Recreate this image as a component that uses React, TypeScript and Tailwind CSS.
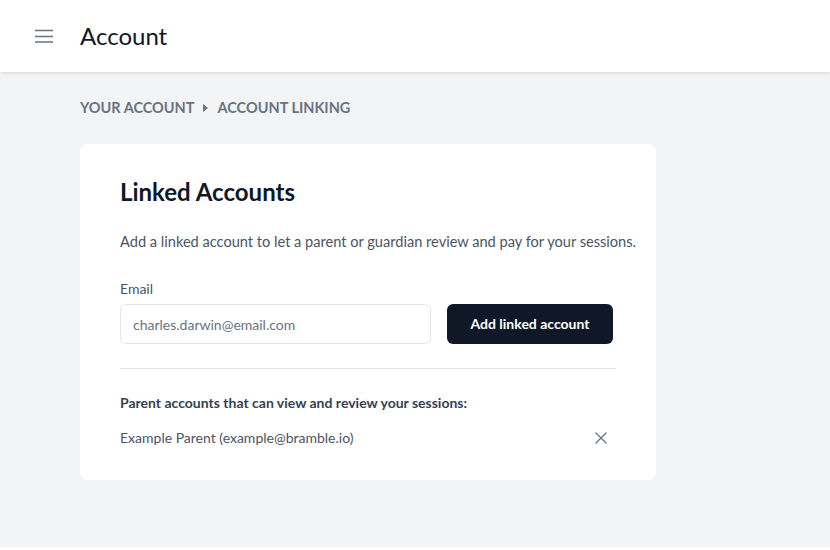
import { X } from 'lucide-react'

function MenuIcon() {
  return (
    <svg width="18" height="14" viewBox="0 0 18 14" className="text-gray-500">
      <path d="M0 1.5h18M0 7.5h18M0 13h18" stroke="currentColor" strokeWidth="1.6" />
    </svg>
  )
}

function Caret() {
  return (
    <svg width="5" height="8" viewBox="0 0 5 8" className="text-gray-500">
      <path d="M0 0L5 4L0 8Z" fill="currentColor" />
    </svg>
  )
}

export default function App() {
  return (
    <div className="h-[550px] bg-white font-['Lato','Noto_Sans',sans-serif] overflow-hidden">
      <div className="h-[547px] bg-gray-100">
        <header className="relative z-10 h-[72px] bg-white shadow-[0_1px_4px_rgba(0,0,0,0.12)] flex items-center">
          <button className="ml-[35px] flex items-center">
            <MenuIcon />
          </button>
          <h1 className="ml-[27px] text-2xl text-gray-900 leading-8">Account</h1>
        </header>

        <main className="pl-20 pt-[26px]">
          <nav className="flex items-center gap-[9px] text-[14.5px] leading-5 font-bold uppercase text-gray-500">
            <span>Your account</span>
            <Caret />
            <span>Account linking</span>
          </nav>

          <section className="mt-[26px] w-[576px] rounded-lg bg-white px-10 pt-8 pb-8">
            <h2 className="text-2xl leading-8 font-bold text-gray-900">Linked Accounts</h2>
            <p className="mt-6 whitespace-nowrap text-[14.6px] leading-5 text-gray-600">
              Add a linked account to let a parent or guardian review and pay for your sessions.
            </p>

            <label className="mt-[27px] block text-sm leading-5 text-gray-600">Email</label>
            <div className="mt-[5px] flex gap-4">
              <input
                className="w-[311px] h-10 rounded-md border border-gray-200 px-3 text-sm text-gray-700 placeholder:text-gray-500 outline-none"
                placeholder="charles.darwin@email.com"
              />
              <button className="w-[166px] h-10 rounded-md bg-gray-900 text-sm font-bold text-white">
                Add linked account
              </button>
            </div>

            <div className="mt-6 border-t border-gray-200" />

            <p className="mt-6 text-sm leading-5 font-bold text-gray-700">
              Parent accounts that can view and review your sessions:
            </p>
            <div className="mt-[15px] flex items-center justify-between">
              <span className="text-sm leading-5 text-gray-600">Example Parent (example@bramble.io)</span>
              <button className="mr-[5px] text-gray-500">
                <X size={20} strokeWidth={1.5} />
              </button>
            </div>
          </section>
        </main>
      </div>
    </div>
  )
}
